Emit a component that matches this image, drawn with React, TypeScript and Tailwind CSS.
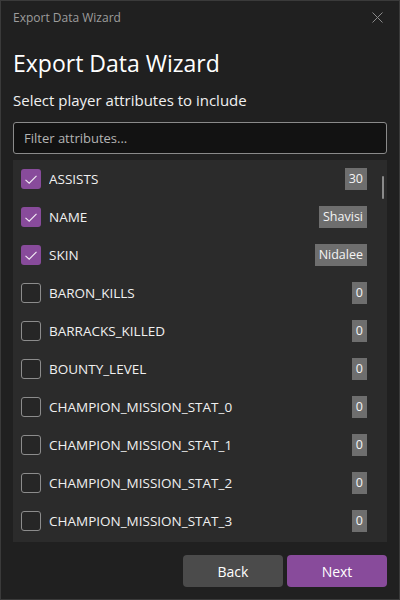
import { useState } from 'react';

const attributes = [
  { name: 'ASSISTS', value: '30', checked: true },
  { name: 'NAME', value: 'Shavisi', checked: true },
  { name: 'SKIN', value: 'Nidalee', checked: true },
  { name: 'BARON_KILLS', value: '0', checked: false },
  { name: 'BARRACKS_KILLED', value: '0', checked: false },
  { name: 'BOUNTY_LEVEL', value: '0', checked: false },
  { name: 'CHAMPION_MISSION_STAT_0', value: '0', checked: false },
  { name: 'CHAMPION_MISSION_STAT_1', value: '0', checked: false },
  { name: 'CHAMPION_MISSION_STAT_2', value: '0', checked: false },
  { name: 'CHAMPION_MISSION_STAT_3', value: '0', checked: false }
];

const CheckBox = ({ checked }: { checked: boolean }) =>
  checked ? (
    <div className="w-[20px] h-[20px] rounded-[3px] bg-[#884b9b] shrink-0 flex items-center justify-center">
      <svg width="20" height="20" viewBox="0 0 20 20" fill="none">
        <path d="M4.5 10.8 L8.2 14.2 L15.5 6.8" stroke="#f4eef6" strokeWidth="1.1" />
      </svg>
    </div>
  ) : (
    <div className="w-[20px] h-[20px] rounded-[3px] border border-[#8c8c8c] bg-[#262626] shrink-0" />
  );

const App = () => {
  const [items, setItems] = useState(attributes);

  const toggle = (index: number) => {
    setItems(items.map((item, i) => (i === index ? { ...item, checked: !item.checked } : item)));
  };

  return (
    <div
      className="w-[400px] h-[600px] bg-[#202020] border border-[#3a3a3a] flex flex-col overflow-hidden text-[#f2f2f2]"
      style={{ fontFamily: '"Open Sans", "Noto Sans", sans-serif' }}
    >
      {/* Title bar */}
      <div className="h-[33px] flex items-center justify-between pl-[12px] pr-[16px] shrink-0">
        <span className="text-[12px] text-[#9d9d9d]">Export Data Wizard</span>
        <svg width="11" height="11" viewBox="0 0 11 11" fill="none">
          <path d="M0.5 0.5 L10.5 10.5 M10.5 0.5 L0.5 10.5" stroke="#8a8a8a" strokeWidth="1" />
        </svg>
      </div>

      <div className="flex flex-col px-[12px]">
        <h1 className="mt-[13px] h-[32px] leading-[32px] text-[23px] font-normal text-white">Export Data Wizard</h1>
        <p className="mt-[11px] h-[20px] leading-[20px] text-[15px] text-[#f0f0f0]">Select player attributes to include</p>

        <input
          className="mt-[12px] h-[32px] w-full rounded-[3px] border border-[#8a8a8a] bg-[#121212] px-[10px] text-[13px] text-white placeholder:text-[#b4b4b4] outline-none"
          placeholder="Filter attributes..."
        />

        {/* Attribute list */}
        <div className="relative mt-[6px] h-[382px] bg-[#2b2b2b] overflow-hidden">
          {items.map((item, index) => (
            <div
              key={item.name}
              onClick={() => toggle(index)}
              className="h-[38px] flex items-center pl-[8px] pr-[20px] gap-[8px] cursor-pointer"
            >
              <CheckBox checked={item.checked} />
              <span className="flex-1 text-[13.5px] text-[#f0f0f0] truncate">{item.name}</span>
              <span className="h-[22px] leading-[22px] px-[4px] min-w-[15px] text-center bg-[#6e6e6e] text-[12.5px] text-[#f4f4f4]">
                {item.value}
              </span>
            </div>
          ))}
          <div className="absolute right-[3px] top-[16px] w-[2px] h-[23px] rounded-full bg-[#8a8a8a]" />
        </div>

        {/* Footer */}
        <div className="mt-[13px] flex justify-end gap-[4px]">
          <button className="w-[100px] h-[32px] rounded-[4px] bg-[#4b4b4b] text-[14px] text-white">Back</button>
          <button className="w-[100px] h-[32px] rounded-[4px] bg-[#884b9b] text-[14px] text-white">Next</button>
        </div>
      </div>
    </div>
  );
};

export default App;
